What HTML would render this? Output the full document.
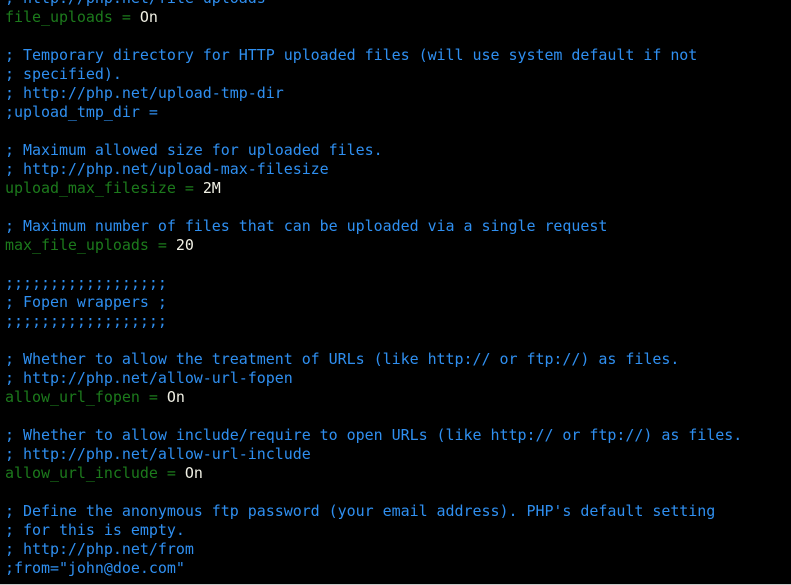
<!DOCTYPE html>
<html><head><meta charset="utf-8"><style>
html,body{margin:0;padding:0;background:#000;width:791px;height:585px;overflow:hidden;position:relative}
pre{margin:0;position:absolute;left:5px;top:-11px;font-family:"DejaVu Sans Mono","Liberation Mono",monospace;font-size:15px;line-height:19px;letter-spacing:-0.04px;color:#2f8ff0;white-space:pre}
.k{color:#1c7a1c}.v{color:#f0f0e4}
.bot{position:absolute;left:0;bottom:0;width:791px;height:1px;background:#c8c8c8}
</style></head><body>
<pre>; http://php.net/file-uploads
<span class="k">file_uploads = </span><span class="v">On</span>

; Temporary directory for HTTP uploaded files (will use system default if not
; specified).
; http://php.net/upload-tmp-dir
;upload_tmp_dir =

; Maximum allowed size for uploaded files.
; http://php.net/upload-max-filesize
<span class="k">upload_max_filesize = </span><span class="v">2M</span>

; Maximum number of files that can be uploaded via a single request
<span class="k">max_file_uploads = </span><span class="v">20</span>

;;;;;;;;;;;;;;;;;;
; Fopen wrappers ;
;;;;;;;;;;;;;;;;;;

; Whether to allow the treatment of URLs (like http:// or ftp://) as files.
; http://php.net/allow-url-fopen
<span class="k">allow_url_fopen = </span><span class="v">On</span>

; Whether to allow include/require to open URLs (like http:// or ftp://) as files.
; http://php.net/allow-url-include
<span class="k">allow_url_include = </span><span class="v">On</span>

; Define the anonymous ftp password (your email address). PHP's default setting
; for this is empty.
; http://php.net/from
;from="john@doe.com"</pre>
<div class="bot"></div>
</body></html>
